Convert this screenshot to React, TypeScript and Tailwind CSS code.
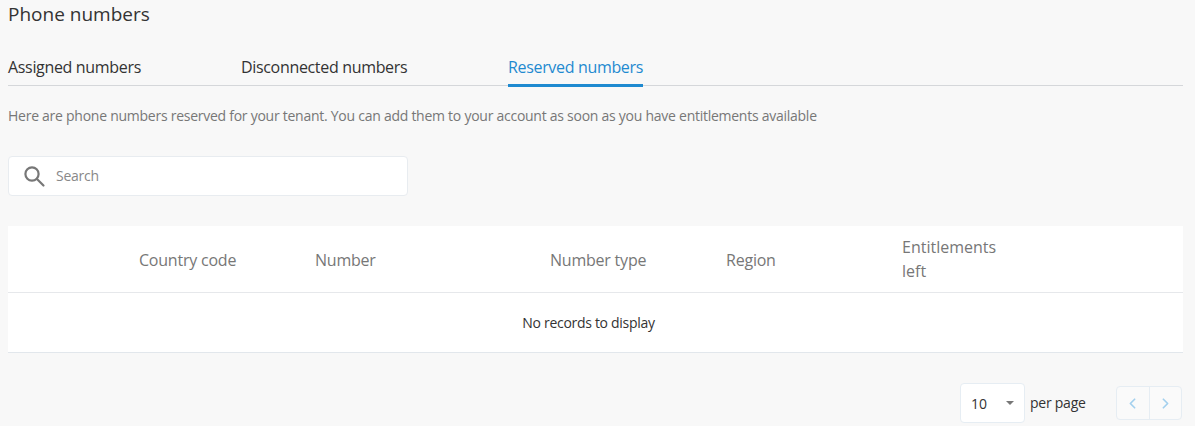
import React from 'react';
import { ChevronLeft, ChevronRight } from 'lucide-react';

const font = "font-['Open_Sans','Noto_Sans',sans-serif]";

const columns = [
  { label: 'Country code', width: 'w-[176px]' },
  { label: 'Number', width: 'w-[235px]' },
  { label: 'Number type', width: 'w-[176px]' },
  { label: 'Region', width: 'w-[176px]' },
];

export default function App() {
  return (
    <div className={`${font} h-[426px] w-[1195px] overflow-hidden bg-[#f8f8f8] pl-2 pr-3`}>
      <h1 className="pt-[2px] text-[19px] leading-6 text-[#333]">Phone numbers</h1>

      <div className="mt-[26px] flex h-[34px] border-b border-[#d5d7da] text-[16px] leading-[31px] tracking-[-0.33px]">
        <div className="w-[233px] text-[#333]">Assigned numbers</div>
        <div className="w-[267px] text-[#333]">Disconnected numbers</div>
        <div className="relative h-[35px] w-[135px] whitespace-nowrap border-b-[3px] border-[#1f8ad0] text-center text-[#1f8ad0]">
          Reserved numbers
        </div>
      </div>

      <p className="mt-[20px] text-[14px] leading-5 tracking-[-0.26px] text-[#777]">
        Here are phone numbers reserved for your tenant. You can add them to your account as soon as you have entitlements available
      </p>

      <div className="mt-[30px] flex h-10 w-[400px] items-center rounded border border-[#e8ecf0] bg-white pl-[13px]">
        <svg width="24" height="24" viewBox="0 0 24 24" fill="none" stroke="#777" strokeWidth="2.2" strokeLinecap="round">
          <circle cx="10" cy="10" r="6.6" />
          <path d="M15 15l6.5 6.5" />
        </svg>
        <span className="ml-[10px] pb-[2px] text-[14px] tracking-[-0.25px] text-[#888]">Search</span>
      </div>

      <div className="mt-[30px] border-b border-[#e2e7ec] bg-white">
        <div className="flex h-[67px] items-center border-b border-[#e6e8eb] pl-[131px] pt-[2px] text-[16px] tracking-[-0.22px] text-[#777]">
          {columns.map((col) => (
            <div key={col.label} className={col.width}>{col.label}</div>
          ))}
          <div className="w-[110px] -translate-y-px leading-6 tracking-normal">Entitlements left</div>
        </div>
        <div className="flex h-[59px] items-center justify-center pr-[14px] text-[14px] tracking-[-0.3px] text-[#333]">
          No records to display
        </div>
      </div>

      <div className="mt-[30px] flex items-center justify-end pr-px">
        <div className="flex h-10 w-[65px] items-center justify-between rounded-sm border border-[#e6edf3] bg-white pl-[10px] pr-[10px] text-[14px] text-[#333]">
          <span>10</span>
          <span className="h-0 w-0 border-x-4 border-t-4 border-x-transparent border-t-[#777]" />
        </div>
        <span className="ml-[5px] mb-[2px] w-[56px] whitespace-nowrap text-[14px] tracking-[-0.25px] text-[#333]">per page</span>
        <div className="ml-[30px] flex h-[34px] w-[66px] rounded-sm border border-[#e6edf3] bg-[#fafafa] text-[#a3d0ee]">
          <div className="flex flex-1 items-center justify-center border-r border-[#e6edf3]">
            <ChevronLeft size={17} strokeWidth={2.4} />
          </div>
          <div className="flex flex-1 items-center justify-center">
            <ChevronRight size={17} strokeWidth={2.4} />
          </div>
        </div>
      </div>
    </div>
  );
}
